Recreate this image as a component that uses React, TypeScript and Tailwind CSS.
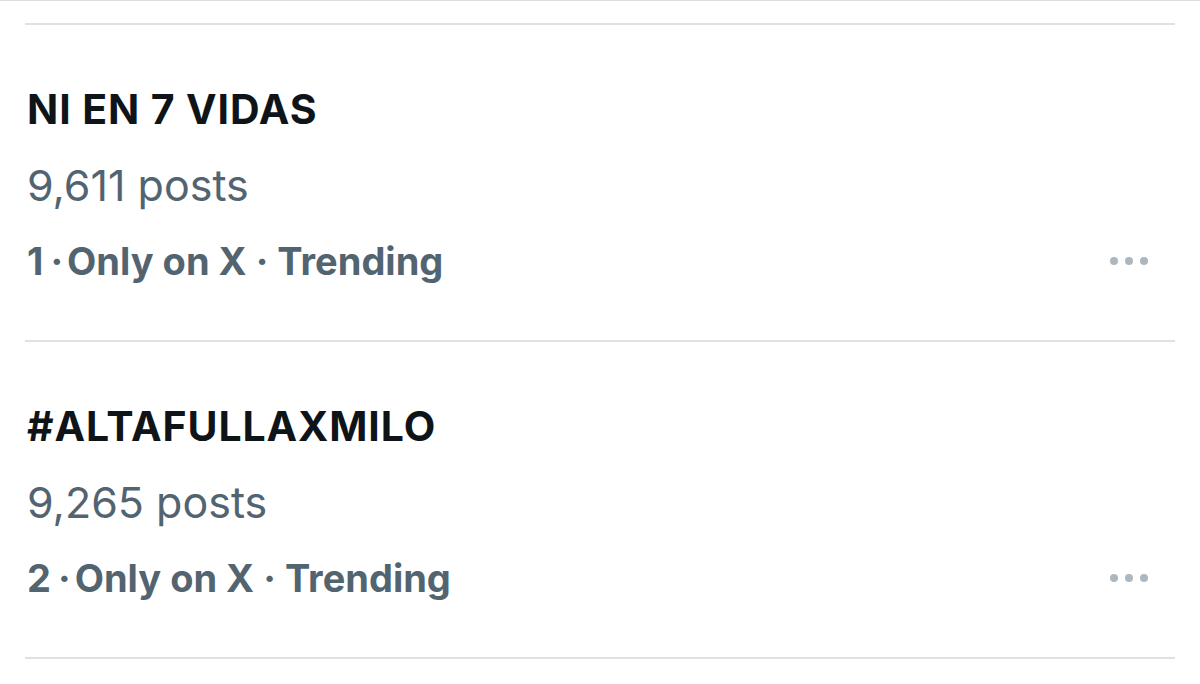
const trends = [
    { rank: 1, name: 'NI EN 7 VIDAS', posts: '9,611' },
    { rank: 2, name: '#ALTAFULLAXMILO', posts: '9,265' },
]

const MoreDots = () => (
    <div className="flex items-center gap-[7px] pr-[27px]">
        <span className="h-[8px] w-[8px] rounded-full bg-[#adb7bf]" />
        <span className="h-[8px] w-[8px] rounded-full bg-[#adb7bf]" />
        <span className="h-[8px] w-[8px] rounded-full bg-[#adb7bf]" />
    </div>
)

const App = () => {
    return (
        <div className="min-h-[684px] w-[1200px] border-t border-[#dedede] bg-white px-[25px] pt-[22px] font-['Inter',sans-serif]">
            {trends.map((trend) => (
                <section key={trend.rank} className="border-t-[2px] border-[#e1e1e1] pt-[46px] pb-[41px] pl-[2px]">
                    <h2 className="text-[41px] leading-[76px] font-bold tracking-[0.9px] text-[#0f1419]">{trend.name}</h2>
                    <p className="text-[43px] leading-[76px] text-[#536471]">{trend.posts} posts</p>
                    <div className="flex items-center justify-between">
                        <p className="text-[38px] leading-[76px] font-bold text-[#536471]">
                            {trend.rank}
                            <span className="ml-[7px] mr-[4px]">·</span>
                            Only on X
                            <span className="ml-[9px] mr-[9px]">·</span>
                            Trending
                        </p>
                        <MoreDots />
                    </div>
                </section>
            ))}
            <div className="border-t-[2px] border-[#e1e1e1]" />
        </div>
    )
}

export default App
